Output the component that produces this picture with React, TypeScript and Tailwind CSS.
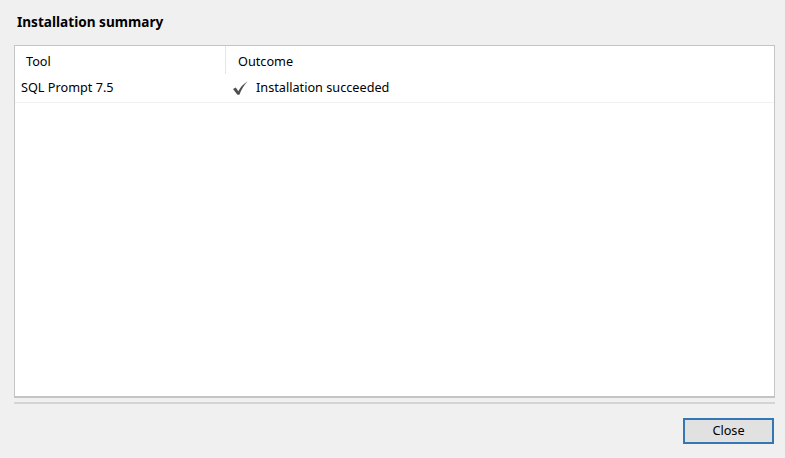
export default function App() {
  return (
    <div
      className="w-[785px] h-[458px] bg-[#f0f0f0] flex flex-col text-[12.7px] text-black"
      style={{ fontFamily: '"Segoe UI", "Noto Sans", "Liberation Sans", sans-serif' }}
    >
      <div className="h-[45px] pl-[17px] pt-[13px] font-bold text-[13.6px] leading-[18px]">Installation summary</div>

      <div className="ml-[14px] mr-[10px] h-[353px] border border-[#c4c4c4] border-b-2 bg-white flex flex-col">
        {/* header */}
        <div className="flex h-[28px]">
          <div className="w-[211px] border-r border-[#e5e5e5] pl-[11px] pt-[6px]">Tool</div>
          <div className="flex-1 pl-[12px] pt-[6px]">Outcome</div>
        </div>
        {/* row */}
        <div className="flex h-[29px] border-b border-[#f0f0f0]">
          <div className="w-[211px] pl-[6px] pt-[4px]">SQL Prompt 7.5</div>
          <div className="flex-1 flex items-start pl-[6px] pt-[4px]">
            <svg width="16" height="16" viewBox="0 0 16 16" className="mt-[2px] mr-[8px]">
              <path d="M1 9 L3.8 7.4 L6.3 11.2 Q9.5 5 15.5 1.5 Q10.5 6.5 7.4 14.8 L5.4 14.8 Z" fill="#4f4f4f" />
            </svg>
            <span>Installation succeeded</span>
          </div>
        </div>
      </div>

      <div className="ml-[14px] mr-[10px] mt-[4px] border-t-2 border-[#d4d4d4]" />

      <div className="flex justify-end pr-[11px] pt-[14px]">
        <button className="w-[91px] h-[26px] border-2 border-[#3576b5] bg-[#e1e1e1] flex items-center justify-center">
          Close
        </button>
      </div>
    </div>
  );
}
